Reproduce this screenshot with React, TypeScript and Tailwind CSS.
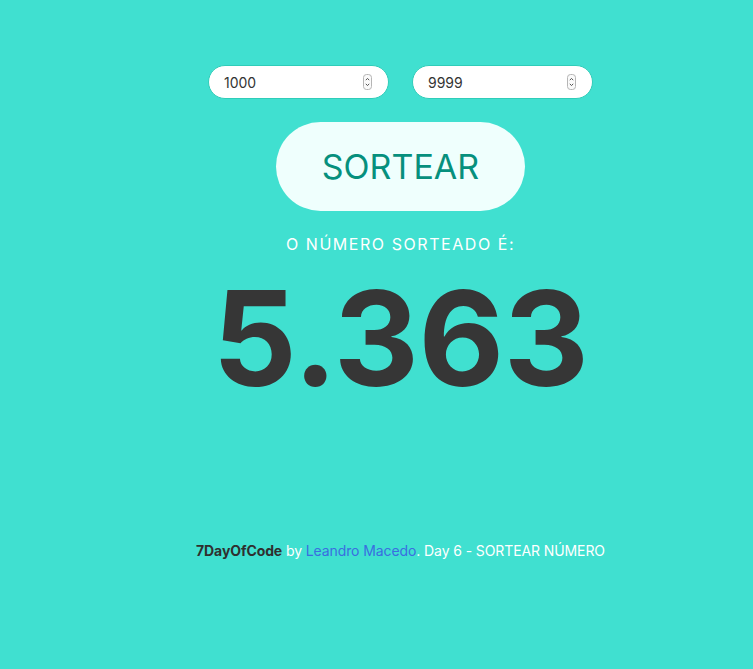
import React from "react";

function Spinner() {
  return (
    <svg width="9" height="16" viewBox="0 0 9 16" className="shrink-0">
      <rect x="0.5" y="0.5" width="8" height="15" rx="3" fill="#fafafa" stroke="#b5b5b5" />
      <path d="M2.8 6.2 L4.5 4.4 L6.2 6.2" fill="none" stroke="#555" strokeWidth="1" />
      <path d="M2.8 9.8 L4.5 11.6 L6.2 9.8" fill="none" stroke="#555" strokeWidth="1" />
    </svg>
  );
}

function NumberField({ value }: { value: string }) {
  return (
    <div className="flex items-center w-[181px] h-[34px] rounded-full bg-white pl-[15px] pr-4 border border-[#2fcdb9]">
      <input
        type="text"
        defaultValue={value}
        className="flex-1 min-w-0 bg-transparent outline-none text-[14px] text-[#333]"
      />
      <Spinner />
    </div>
  );
}

export default function App() {
  return (
    <div
      className="min-h-[669px] w-full bg-[#40e0d0] pl-12 flex flex-col items-center"
      style={{ fontFamily: "Inter, 'Noto Sans', sans-serif" }}
    >
      <div className="flex gap-[23px] mt-[65px]">
        <NumberField value="1000" />
        <NumberField value="9999" />
      </div>

      <button className="mt-[23px] w-[249px] h-[89px] rounded-full bg-[#effffd] text-[#06907d] text-[34px] font-normal">
        SORTEAR
      </button>

      <p className="mt-[23px] text-white text-[16px] tracking-[1.55px] leading-5">
        O NÚMERO SORTEADO É:
      </p>

      <h1 className="mt-[9px] text-[#363636] text-[132px] font-bold leading-[150px] tracking-[-0.5px]">
        5.363
      </h1>

      <footer className="mt-[130px] text-[14px] tracking-[-0.1px] text-white leading-4">
        <span className="font-bold text-[#2f2f2f]">7DayOfCode</span> by{" "}
        <a href="#" className="text-[#3a6ee0]">Leandro Macedo</a>. Day 6 - SORTEAR NÚMERO
      </footer>
    </div>
  );
}
